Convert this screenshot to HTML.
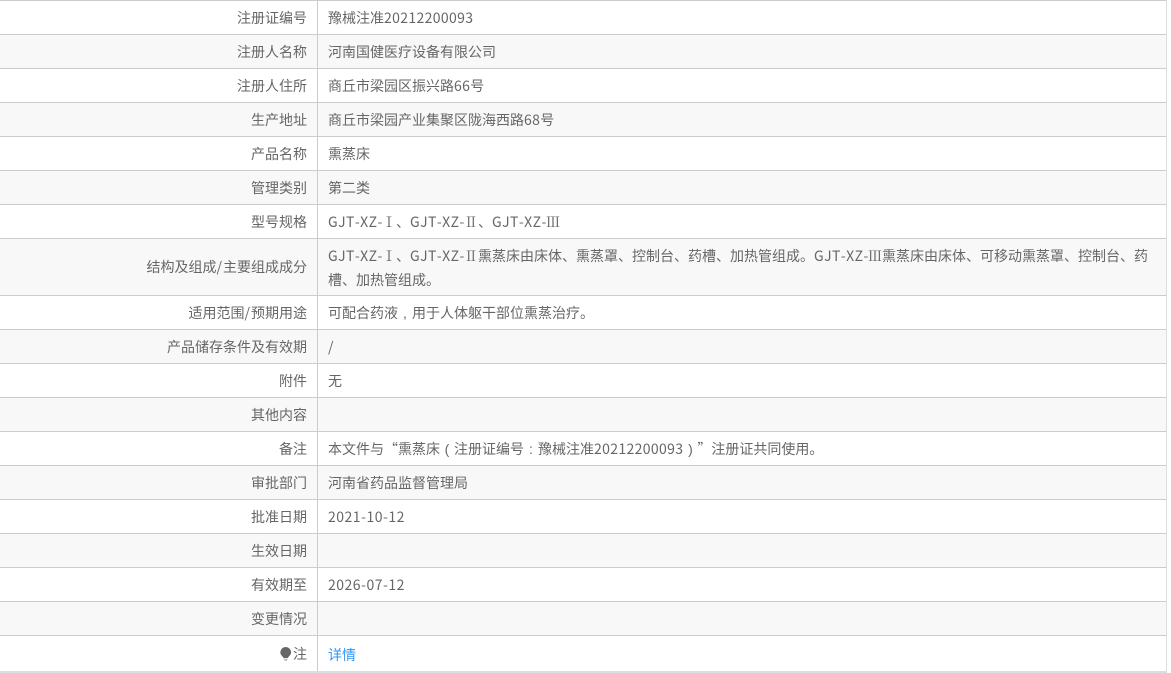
<!DOCTYPE html>
<html lang="zh-CN">
<head>
<meta charset="utf-8">
<title>注册证信息</title>
<style>
html,body{margin:0;padding:0;background:#fff;width:1171px;height:673px;overflow:hidden}
body{position:relative;font-family:"Noto Sans CJK SC","Liberation Sans",sans-serif;font-size:14px;color:#666;text-spacing-trim:space-all;font-kerning:none}
.r{position:absolute;left:0;width:1166px;border-top:1px solid #ccc;box-sizing:border-box}
.g{background:#f8f8f8}
.l{position:absolute;left:0;top:0;width:307px;text-align:right;line-height:34px}
.v{position:absolute;left:328px;top:0;width:826px;line-height:24px;padding-top:5px}
.vl{position:absolute;left:317px;top:0;width:1px;height:671px;background:#ccc}
.rb{position:absolute;left:1166px;top:0;width:1px;height:671px;background:#ddd}
.bb{position:absolute;left:0;top:671px;width:1167px;height:2px;background:#ddd}
a{color:#2f96f5;text-decoration:none}
.d{letter-spacing:.36px}
.t{letter-spacing:.5px}
.m{display:inline-block;width:54px;letter-spacing:.45px;white-space:nowrap}
.n{display:inline-block;width:14px;text-align:center;font-family:"Noto Serif CJK SC","Noto Sans CJK SC",serif}
.p{display:inline-block;width:14px;text-align:center;font-family:"Liberation Sans",sans-serif}
.sl{letter-spacing:1px}
</style>
</head>
<body>
<div class="r" style="top:0;height:34px"><div class="l">注册证编号</div><div class="v">豫械注准<span class="d">20212200093</span></div></div>
<div class="r g" style="top:34px;height:34px"><div class="l">注册人名称</div><div class="v">河南国健医疗设备有限公司</div></div>
<div class="r" style="top:68px;height:34px"><div class="l">注册人住所</div><div class="v">商丘市梁园区振兴路<span class="d">66</span>号</div></div>
<div class="r g" style="top:102px;height:34px"><div class="l">生产地址</div><div class="v">商丘市梁园产业集聚区陇海西路<span class="d">68</span>号</div></div>
<div class="r" style="top:136px;height:34px"><div class="l">产品名称</div><div class="v">熏蒸床</div></div>
<div class="r g" style="top:170px;height:34px"><div class="l">管理类别</div><div class="v">第二类</div></div>
<div class="r" style="top:204px;height:34px"><div class="l">型号规格</div><div class="v"><span class="m">GJT-XZ-</span><span class="n">Ⅰ</span>、<span class="m">GJT-XZ-</span><span class="n">Ⅱ</span>、<span class="m">GJT-XZ-</span><span class="n">Ⅲ</span></div></div>
<div class="r g" style="top:238px;height:57px"><div class="l" style="line-height:57px">结构及组成<span class="sl">/</span>主要组成成分</div><div class="v"><span class="m">GJT-XZ-</span><span class="n">Ⅰ</span>、<span class="m">GJT-XZ-</span><span class="n">Ⅱ</span>熏蒸床由床体、熏蒸罩、控制台、药槽、加热管组成。<span class="m">GJT-XZ-</span><span class="n">Ⅲ</span>熏蒸床由床体、可移动熏蒸罩、控制台、药槽、加热管组成。</div></div>
<div class="r" style="top:295px;height:34px"><div class="l">适用范围<span class="sl">/</span>预期用途</div><div class="v">可配合药液<span class="p">,</span>用于人体躯干部位熏蒸治疗。</div></div>
<div class="r g" style="top:329px;height:34px"><div class="l">产品储存条件及有效期</div><div class="v">/</div></div>
<div class="r" style="top:363px;height:34px"><div class="l">附件</div><div class="v">无</div></div>
<div class="r g" style="top:397px;height:34px"><div class="l">其他内容</div><div class="v"></div></div>
<div class="r" style="top:431px;height:34px"><div class="l">备注</div><div class="v">本文件与“熏蒸床<span class="p">(</span>注册证编号<span class="p">:</span>豫械注准<span class="d">20212200093</span><span class="p">)</span>”注册证共同使用。</div></div>
<div class="r g" style="top:465px;height:34px"><div class="l">审批部门</div><div class="v">河南省药品监督管理局</div></div>
<div class="r" style="top:499px;height:34px"><div class="l">批准日期</div><div class="v"><span class="t">2021-10-12</span></div></div>
<div class="r g" style="top:533px;height:34px"><div class="l">生效日期</div><div class="v"></div></div>
<div class="r" style="top:567px;height:34px"><div class="l">有效期至</div><div class="v"><span class="t">2026-07-12</span></div></div>
<div class="r g" style="top:601px;height:34px"><div class="l">变更情况</div><div class="v"></div></div>
<div class="r" style="top:635px;height:36px"><div class="l" style="line-height:36px">注</div><div class="v" style="padding-top:7px"><a>详情</a></div>
<svg style="position:absolute;left:280px;top:11px" width="12" height="15" viewBox="0 0 12 15"><path d="M5.700 0A5.400 5.400 0 0 0 .3 5.200c0 1.900 1 3 1.900 3.900.6.600 1 1.100 1.200 1.900h4.600c.2-.8.6-1.300 1.200-1.900.9-.9 1.900-2 1.900-3.900A5.400 5.400 0 0 0 5.700 0z" fill="#666"/><path d="M3.800 11.800h3.800v.9H3.800zM4.500 13.200h2.400v.8H4.500z" fill="#aaa"/></svg>
</div>
<div class="vl"></div>
<div class="rb"></div>
<div class="bb"></div>
</body>
</html>
